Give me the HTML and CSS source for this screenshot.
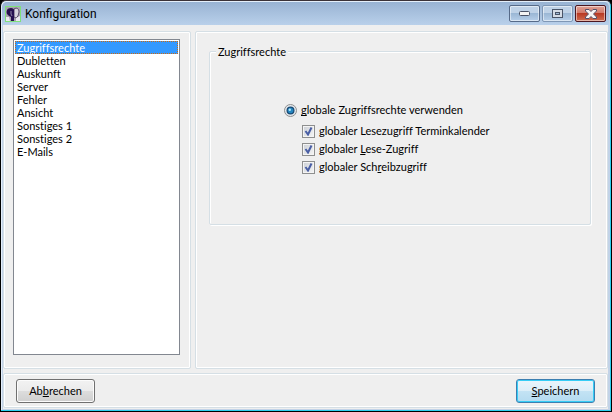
FILE: index.html
```html
<!doctype html>
<html lang="de">
  <head>
    <meta charset="utf-8">
    <title>Konfiguration</title>
    <link rel="stylesheet" href="styles.css">
  </head>
  <body>
    <div class="window">
      <header class="titlebar">
        <svg class="app-icon" width="16" height="16" viewBox="0 0 16 16" aria-hidden="true">
          <rect width="16" height="16" fill="#aaa3b0"/>
          <path d="M9 3c3-2 5 0 5 3l-1 4-2 2-2-1z" fill="#d9d5de" stroke="#5a4a6a"/>
          <path d="M6 2C2 2 1 5 2 8l2 2 2 1v4h3V4C9 3 8 2 6 2z" fill="#26104f"/>
          <path d="M6 5v3l1 2" fill="none" stroke="#8f83a8"/>
          <path d="M1 11h3l1 4H1zM11 12l4-2v5h-4z" fill="#eceaf0"/>
          <rect x=".5" y=".5" width="15" height="15" fill="none" stroke="#7fe07b"/>
        </svg>
        <h1>Konfiguration</h1>
        <div class="caption-buttons">
          <button class="caption" type="button" aria-label="Minimieren">
            <svg width="11" height="5" viewBox="0 0 11 5"><rect x=".5" y=".5" width="10" height="4" rx="1" fill="#f4f4f4" stroke="#4a5266"/></svg>
          </button>
          <button class="caption dim" type="button" aria-label="Maximieren">
            <svg width="11" height="9" viewBox="0 0 11 9"><rect x=".5" y=".5" width="10" height="8" fill="#d5dce6" stroke="#4a5568"/><rect x="3.5" y="3.5" width="4" height="2" fill="#9fb8d5" stroke="#4a5568"/></svg>
          </button>
          <button class="caption close" type="button" aria-label="Schließen">
            <svg width="12" height="10" viewBox="0 0 12 10"><path d="M.5.5h3.5l2 2 2-2h3.500v1.500L8.500 5l3 3v1.500H8l-2-2-2 2H.5V8l3-3-3-3z" fill="#f6f3f3" stroke="#53506a"/></svg>
          </button>
        </div>
      </header>

      <form class="client">
        <div class="main">
          <div class="panel nav">
            <select class="topics" size="23" aria-label="Bereich">
              <option selected>Zugriffsrechte</option>
              <option>Dubletten</option>
              <option>Auskunft</option>
              <option>Server</option>
              <option>Fehler</option>
              <option>Ansicht</option>
              <option>Sonstiges 1</option>
              <option>Sonstiges 2</option>
              <option>E-Mails</option>
            </select>
          </div>
          <div class="panel content">
            <fieldset>
              <legend>Zugriffsrechte</legend>
              <label class="choice"><input type="radio" name="rechte" checked><span><u>g</u>lobale Zugriffsrechte verwenden</span></label>
              <div class="sub">
                <label class="choice"><input type="checkbox" checked><span>globaler Lesezugriff Terminkalender</span></label>
                <label class="choice"><input type="checkbox" checked><span>globaler <u>L</u>ese-Zugriff</span></label>
                <label class="choice"><input type="checkbox" checked><span>globaler Sch<u>r</u>eibzugriff</span></label>
              </div>
            </fieldset>
          </div>
        </div>
        <div class="panel actions">
          <button class="btn" type="button"><span>Ab<u>b</u>rechen</span></button>
          <button class="btn default" type="submit"><span><u>S</u>peichern</span></button>
        </div>
      </form>
    </div>
  </body>
</html>
```

FILE: styles.css
```css
* {
  box-sizing: border-box;
}

body {
  margin: 0;
  background: #000;
  color: #000;
  font: 11px/13px Lato, "Liberation Sans", Arial, sans-serif;
  font-variant-ligatures: none;
}

button, select, input {
  font: inherit;
  font-variant-ligatures: none;
  color: inherit;
}

u {
  text-decoration-skip-ink: none;
}

.window {
  display: flex;
  flex-direction: column;
  height: 100vh;
  border: 1px solid #000;
  border-top-color: #3a3238;
  border-radius: 6px 6px 0 0;
  background: #c3d3e8;
  box-shadow: inset -1px -1px 0 #2bd0ee, inset 1px 1px 0 #e4effa;
  padding: 1px 3px 2px 2px;
}

.titlebar {
  display: flex;
  align-items: center;
  flex: none;
  height: 23px;
  margin: 0 -1px;
  padding: 0 3px;
  border-radius: 5px 5px 0 0;
  background: linear-gradient(#98b3d3, #b9d0ea);
}

.titlebar h1 {
  flex: 1;
  margin: 0 0 0 4px;
  font: 12px/16px Roboto, "Segoe UI", sans-serif;
}

.caption-buttons {
  display: flex;
  gap: 2px;
}

.caption {
  display: flex;
  align-items: center;
  justify-content: center;
  width: 31px;
  height: 17px;
  padding: 0;
  border: 1px solid #566a88;
  border-radius: 2px;
  background: linear-gradient(#bfd2e7 45%, #9bb7d5 50%, #b7cfe9);
  box-shadow: inset 0 0 0 1px rgba(255, 255, 255, 0.5);
}

.caption.dim {
  border-color: #7f97b5;
}

.caption.close {
  border-color: #4b1620;
  background: linear-gradient(#dfa196 0%, #d2796a 45%, #b93a24 50%, #cf6c50);
}

.client {
  display: flex;
  flex: 1;
  flex-direction: column;
  gap: 4px;
  min-height: 0;
  padding: 6px 0 1px;
  background: #efefef;
}

.main {
  display: flex;
  flex: 1;
  gap: 4px;
  min-height: 0;
}

.panel {
  border: 1px solid #d5dfe5;
  border-radius: 2px;
  box-shadow: inset 0 0 0 1px #fff;
}

.nav {
  display: flex;
  flex: none;
  width: 188px;
  padding: 7px 10px 13px 9px;
}

.topics {
  flex: 1;
  padding: 1px;
  border: 1px solid #828790;
  border-radius: 0;
  outline: none;
  background: #fff;
  overflow: hidden;
}

.topics option {
  min-height: 13px;
  padding: 0 2px;
  line-height: 13px;
}

.topics option:checked {
  outline: 1px dotted #cc6a11;
  outline-offset: -1px;
  background: linear-gradient(#39f, #39f);
  color: #fff;
  -webkit-text-fill-color: #fff;
}

.content {
  flex: 1;
  padding: 13px 16px 13px 13px;
}

fieldset {
  min-width: 0;
  height: 180px;
  margin: 0;
  padding: 43px 0 0 74px;
  border: 1px solid #d5dfe5;
  border-radius: 2px;
  box-shadow: inset 1px 1px 0 #fff, 1px 1px 0 #fff;
}

legend {
  margin-left: -68px;
  padding: 0 2px;
  background: #efefef;
}

.choice {
  display: flex;
  align-items: center;
  gap: 4px;
  height: 18px;
}

.choice span {
  padding-bottom: 2px;
}

.sub {
  margin: 3px 0 0 18px;
}

.choice input {
  flex: none;
  appearance: none;
  width: 13px;
  height: 13px;
  margin: 0;
  border: 1px solid #8e8f8f;
}

.choice input[type=radio] {
  border-radius: 50%;
  background: url("data:image/svg+xml,%3Csvg xmlns='http://www.w3.org/2000/svg' viewBox='0 0 11 11'%3E%3Ccircle cx='5.5' cy='5.5' r='4' fill='%231b4a73'/%3E%3Ccircle cx='5.5' cy='5.5' r='2.8' fill='%232486c0'/%3E%3Ccircle cx='4.8' cy='4.7' r='1.2' fill='%23b4e8fa'/%3E%3C/svg%3E") #e4e8ec;
}

.choice input[type=checkbox] {
  background: url("data:image/svg+xml,%3Csvg xmlns='http://www.w3.org/2000/svg' viewBox='0 0 11 11'%3E%3Cpath d='M2.500 5l2.500 3.500L8.500 1.500' fill='none' stroke='%234a5fa5' stroke-width='2'/%3E%3C/svg%3E"), linear-gradient(135deg, #cbcfd5, #f6f6f6);
  box-shadow: inset 0 0 0 1px #f4f4f4;
}

.actions {
  display: flex;
  align-items: center;
  justify-content: space-between;
  flex: none;
  height: 35px;
  padding: 0 12px;
}

.btn {
  width: 79px;
  height: 24px;
  padding: 0;
  border: 1px solid #707070;
  border-radius: 3px;
  background: linear-gradient(#f2f2f2, #ebebeb 50%, #dddddd 50%, #cfcfcf);
  box-shadow: inset 0 0 0 1px #fcfcfc;
}

.btn.default {
  border-color: #3c7fb1;
  background: linear-gradient(#eaf5fb, #dceef8 50%, #c4e3f4 50%, #b4dbf0);
  box-shadow: inset 0 0 0 1px #36cdf6;
}
```
